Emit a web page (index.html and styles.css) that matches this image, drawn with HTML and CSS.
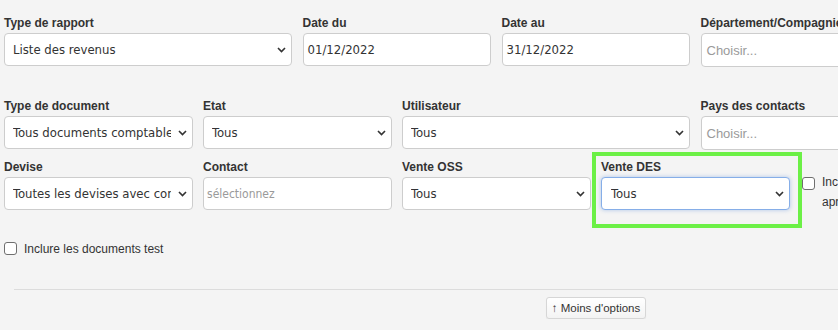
FILE: index.html
```html
<!DOCTYPE html>
<html lang="fr">

<head>
    <meta charset="UTF-8">
    <meta name="viewport" content="width=device-width, initial-scale=1.0">
    <title>Rapports</title>
    <link rel="stylesheet" href="styles.css">
</head>

<body>
    <div class="page">
        <div class="row row-first">
            <div class="field span-3">
                <label class="field-label">Type de rapport</label>
                <div class="select">
                    <span class="select-value">Liste des revenus</span>
                    <svg class="chevron" width="9" height="6" viewBox="0 0 9 6"><polyline points="1,1 4.5,4.6 8,1" /></svg>
                </div>
            </div>
            <div class="field span-2">
                <label class="field-label">Date du</label>
                <div class="input">01/12/2022</div>
            </div>
            <div class="field span-2">
                <label class="field-label">Date au</label>
                <div class="input">31/12/2022</div>
            </div>
            <div class="field span-2">
                <label class="field-label">Département/Compagnie</label>
                <div class="input multi"><span class="placeholder">Choisir...</span></div>
            </div>
        </div>

        <div class="row row-second">
            <div class="field span-2">
                <label class="field-label">Type de document</label>
                <div class="select">
                    <span class="select-value">Tous documents comptables</span>
                    <svg class="chevron" width="9" height="6" viewBox="0 0 9 6"><polyline points="1,1 4.5,4.6 8,1" /></svg>
                </div>
            </div>
            <div class="field span-2">
                <label class="field-label">Etat</label>
                <div class="select">
                    <span class="select-value">Tous</span>
                    <svg class="chevron" width="9" height="6" viewBox="0 0 9 6"><polyline points="1,1 4.5,4.6 8,1" /></svg>
                </div>
            </div>
            <div class="field span-3">
                <label class="field-label">Utilisateur</label>
                <div class="select">
                    <span class="select-value">Tous</span>
                    <svg class="chevron" width="9" height="6" viewBox="0 0 9 6"><polyline points="1,1 4.5,4.6 8,1" /></svg>
                </div>
            </div>
            <div class="field span-2">
                <label class="field-label">Pays des contacts</label>
                <div class="input multi"><span class="placeholder">Choisir...</span></div>
            </div>
        </div>

        <div class="row row-third">
            <div class="field span-2">
                <label class="field-label">Devise</label>
                <div class="select">
                    <span class="select-value">Toutes les devises avec conversion</span>
                    <svg class="chevron" width="9" height="6" viewBox="0 0 9 6"><polyline points="1,1 4.5,4.6 8,1" /></svg>
                </div>
            </div>
            <div class="field span-2">
                <label class="field-label">Contact</label>
                <div class="input contact"><span class="placeholder small">sélectionnez</span></div>
            </div>
            <div class="field span-2">
                <label class="field-label">Vente OSS</label>
                <div class="select">
                    <span class="select-value">Tous</span>
                    <svg class="chevron" width="9" height="6" viewBox="0 0 9 6"><polyline points="1,1 4.5,4.6 8,1" /></svg>
                </div>
            </div>
            <div class="field span-2 highlighted">
                <label class="field-label">Vente DES</label>
                <div class="select focused">
                    <span class="select-value">Tous</span>
                    <svg class="chevron" width="9" height="6" viewBox="0 0 9 6"><polyline points="1,1 4.5,4.6 8,1" /></svg>
                </div>
            </div>
            <div class="field span-2 check-field">
                <label class="check">
                    <span class="box"></span>
                    <span>Inclure les paiements reçus après la date de fin</span>
                </label>
            </div>
        </div>

        <div class="row-check">
            <label class="check">
                <span class="box"></span>
                <span>Inclure les documents test</span>
            </label>
        </div>

        <div class="footer">
            <button class="btn-less">↑ Moins d'options</button>
        </div>
    </div>
</body>

</html>
```

FILE: styles.css
```css
html,
body {
    margin: 0;
    overflow: hidden;
}

body {
    background: #f4f4f4;
    color: #333;
    font-family: "Liberation Sans", Arial, sans-serif;
    font-size: 12px;
}

.page {
    width: 1184px;
    padding: 16px 4px 0;
}

.row {
    display: grid;
    grid-template-columns: repeat(12, 89px);
    column-gap: 10.5px;
}

.row-first {
    margin-bottom: 32px;
}

.row-second {
    margin-bottom: 10px;
}

.span-2 {
    grid-column: span 2;
}

.span-3 {
    grid-column: span 3;
}

.field {
    position: relative;
    min-width: 0;
}

.field-label {
    display: block;
    font-weight: bold;
    line-height: 14px;
    margin-bottom: 3px;
    white-space: nowrap;
}

.select,
.input {
    box-sizing: border-box;
    height: 33px;
    display: flex;
    align-items: center;
    background: #fff;
    border: 1px solid #cdcdcd;
    border-radius: 4px;
    font-family: "DejaVu Sans Condensed", "DejaVu Sans", sans-serif;
    font-stretch: condensed;
    font-size: 13px;
    color: #333;
    white-space: nowrap;
}

.select {
    padding: 0 5px 0 8px;
    gap: 7px;
}

.select-value {
    flex: 1;
    min-width: 0;
    overflow: hidden;
}

.chevron {
    flex: none;
    fill: none;
    stroke: #333;
    stroke-width: 1.6;
}

.input {
    padding: 0 4px;
}

.input.multi {
    height: 34px;
    padding-left: 5px;
}

.input.contact {
    padding-left: 3px;
}

.placeholder {
    color: #9a9a9a;
    font-family: "Liberation Sans", Arial, sans-serif;
    font-stretch: normal;
}

.placeholder.small {
    font-family: "DejaVu Sans Condensed", "DejaVu Sans", sans-serif;
    font-stretch: condensed;
    font-size: 12px;
}

.select.focused {
    border-color: #86aee8;
    box-shadow: 0 0 4px rgba(90, 140, 220, 0.45);
    padding-left: 9px;
}

.highlighted::after {
    content: "";
    position: absolute;
    left: -9px;
    right: -12px;
    top: -8px;
    bottom: -16px;
    border: 4px solid #6cf046;
    pointer-events: none;
}

.check {
    display: flex;
    align-items: flex-start;
    gap: 7px;
    line-height: 20px;
}

.check .box {
    flex: none;
    box-sizing: border-box;
    width: 13px;
    height: 13px;
    margin-top: 5px;
    background: #fff;
    border: 1px solid #6f6f6f;
    border-radius: 3px;
}

.check-field {
    padding: 12px 0 0 2px;
}

.row-check {
    margin-top: 30px;
}

.row-check .check {
    line-height: 14px;
}

.row-check .check .box {
    margin-top: 0;
}

.footer {
    margin: 33px 10px 0;
    padding-top: 7px;
    border-top: 1px solid #dcdcdc;
    text-align: center;
}

.btn-less {
    height: 22px;
    padding: 0 5px;
    font-family: "Liberation Sans", Arial, sans-serif;
    font-size: 11.5px;
    color: #333;
    background: linear-gradient(#fff, #f3f3f3);
    border: 1px solid #d6d6d6;
    border-radius: 3px;
    box-shadow: 0 1px 1px rgba(0, 0, 0, 0.06);
}
```
